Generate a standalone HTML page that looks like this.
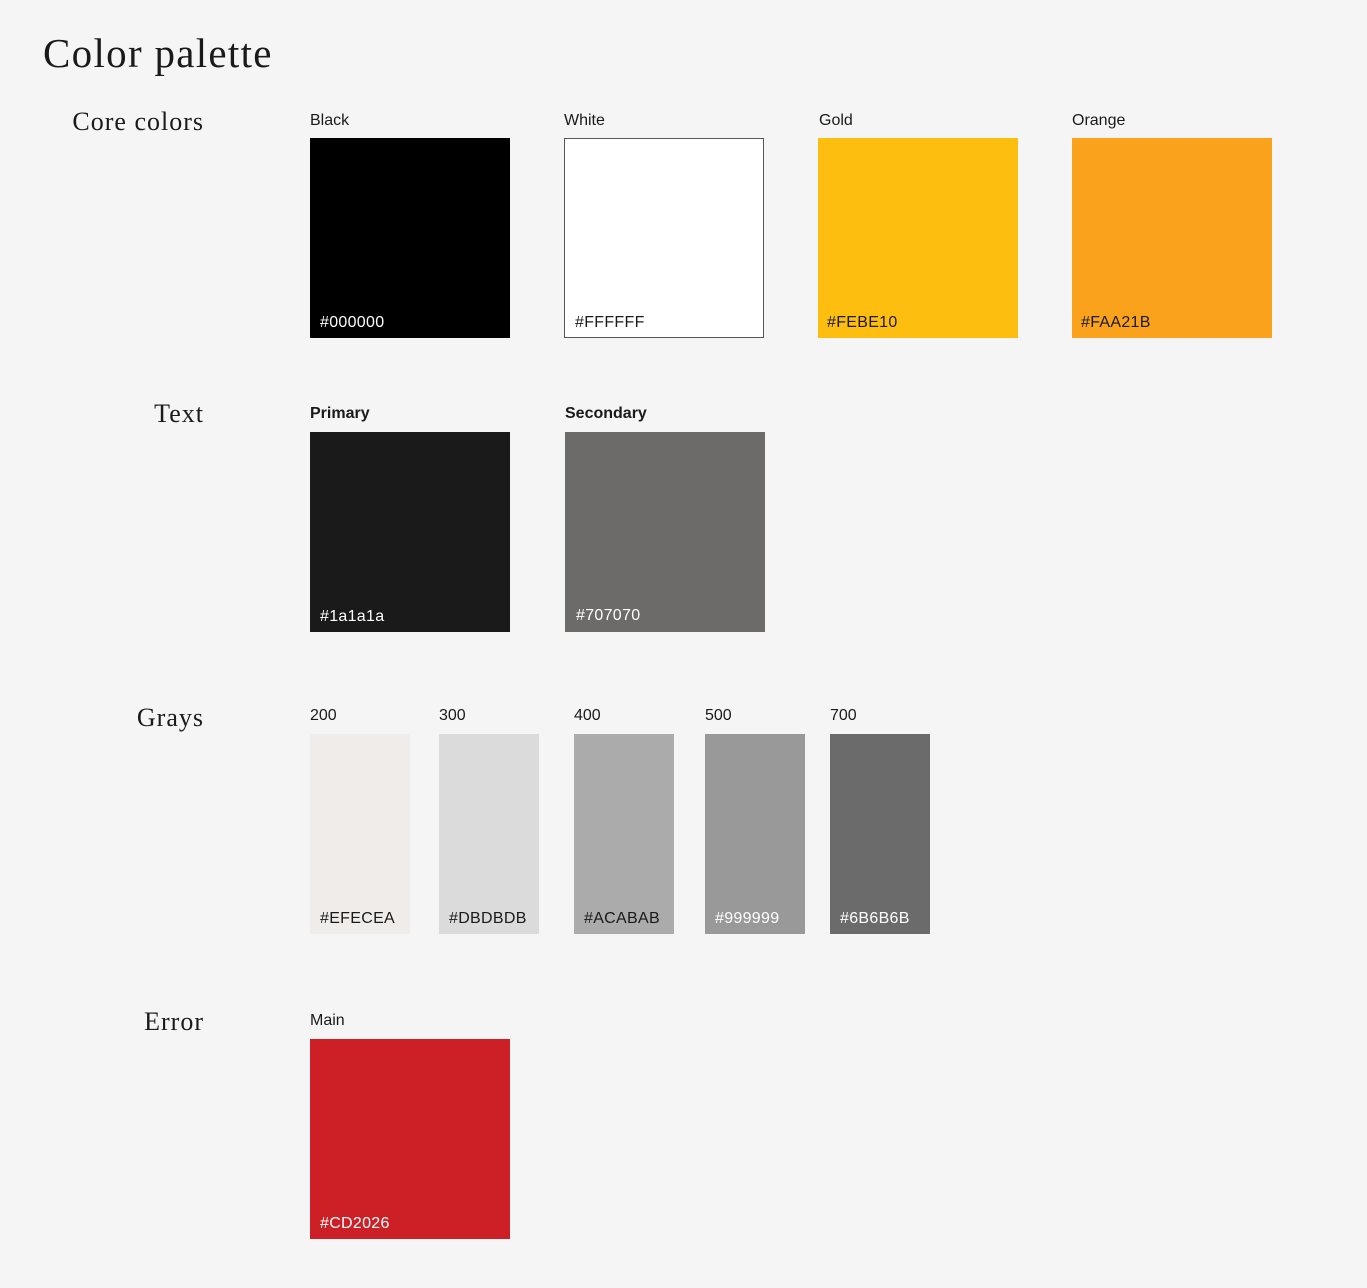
<!DOCTYPE html>
<html><head><style>
body{margin:0;width:1367px;height:1288px;background:#f5f5f5;position:relative;font-family:"Liberation Sans",sans-serif;color:#1a1a1a;overflow:hidden}
.h{position:absolute;font-family:"Liberation Serif",serif;color:#1a1a1a;white-space:nowrap;line-height:1}
.sec{font-size:26px;right:1163px;text-align:right;letter-spacing:1px}
.l{position:absolute;font-size:16px;line-height:1;white-space:nowrap}
.s{position:absolute;box-sizing:border-box}
.s span{position:absolute;left:10px;bottom:7px;font-size:16px;line-height:1;letter-spacing:0.3px}
</style></head><body>
<div class="h" style="left:43px;top:33px;font-size:41px;letter-spacing:1.3px">Color palette</div>

<div class="h sec" style="top:109px">Core colors</div>
<div class="l" style="left:310px;top:113px">Black</div>
<div class="l" style="left:564px;top:113px">White</div>
<div class="l" style="left:819px;top:113px">Gold</div>
<div class="l" style="left:1072px;top:113px">Orange</div>
<div class="s" style="left:310px;top:138px;width:200px;height:200px;background:#000;color:#fff"><span>#000000</span></div>
<div class="s" style="left:564px;top:138px;width:200px;height:200px;background:#fff;border:1px solid #555;color:#1a1a1a"><span style="left:10px;bottom:6px">#FFFFFF</span></div>
<div class="s" style="left:818px;top:138px;width:200px;height:200px;background:#febe10;color:#1a1a1a"><span style="left:9px">#FEBE10</span></div>
<div class="s" style="left:1072px;top:138px;width:200px;height:200px;background:#faa21b;color:#1a1a1a"><span style="left:9px">#FAA21B</span></div>

<div class="h sec" style="top:401px">Text</div>
<div class="l" style="left:310px;top:406px;font-weight:bold">Primary</div>
<div class="l" style="left:565px;top:406px;font-weight:bold">Secondary</div>
<div class="s" style="left:310px;top:432px;width:200px;height:200px;background:#1a1a1a;color:#fff"><span>#1a1a1a</span></div>
<div class="s" style="left:565px;top:432px;width:200px;height:200px;background:#6c6b69;color:#fff"><span style="left:11px;bottom:8px">#707070</span></div>

<div class="h sec" style="top:705px">Grays</div>
<div class="l" style="left:310px;top:708px">200</div>
<div class="l" style="left:439px;top:708px">300</div>
<div class="l" style="left:574px;top:708px">400</div>
<div class="l" style="left:705px;top:708px">500</div>
<div class="l" style="left:830px;top:708px">700</div>
<div class="s" style="left:310px;top:734px;width:100px;height:200px;background:#efecea;color:#1a1a1a"><span>#EFECEA</span></div>
<div class="s" style="left:439px;top:734px;width:100px;height:200px;background:#dbdbdb;color:#1a1a1a"><span>#DBDBDB</span></div>
<div class="s" style="left:574px;top:734px;width:100px;height:200px;background:#acabab;color:#1a1a1a"><span>#ACABAB</span></div>
<div class="s" style="left:705px;top:734px;width:100px;height:200px;background:#999999;color:#fff"><span>#999999</span></div>
<div class="s" style="left:830px;top:734px;width:100px;height:200px;background:#6b6b6b;color:#fff"><span>#6B6B6B</span></div>

<div class="h sec" style="top:1009px">Error</div>
<div class="l" style="left:310px;top:1013px">Main</div>
<div class="s" style="left:310px;top:1039px;width:200px;height:200px;background:#cd2026;color:#fff"><span>#CD2026</span></div>
</body></html>
